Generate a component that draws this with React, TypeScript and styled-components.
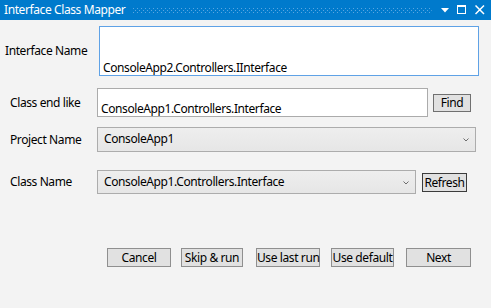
import React from "react";
import styled, { createGlobalStyle } from "styled-components";

const Global = createGlobalStyle`
  html, body { margin: 0; padding: 0; background: #f3f3f3; }
  body { font-family: "Noto Sans", "Open Sans", sans-serif; font-size: 12px; letter-spacing: -0.4px; color: #000; }
  * { box-sizing: border-box; }
`;

const Window = styled.div`
  width: 491px;
  height: 308px;
  background: #f3f3f3;
  display: flex;
  flex-direction: column;
  overflow: hidden;
`;

const TitleBar = styled.div`
  height: 20px;
  background: #007acc;
  display: flex;
  align-items: center;
  padding: 0 6px 0 4px;
  color: #fff;
`;

const Title = styled.span`
  font-size: 12px;
  line-height: 20px;
  white-space: nowrap;
`;

const GripBox = styled.svg`
  flex: 1;
  height: 5px;
  margin: 1px 9px 0 8px;
`;

const TitleIcons = styled.div`
  display: flex;
  align-items: center;
  gap: 8px;
  height: 20px;
`;

const Content = styled.div`
  display: flex;
  flex-direction: column;
`;

const Row = styled.div<{ $top: number; $h: number }>`
  display: grid;
  grid-template-columns: 97px auto auto;
  justify-content: start;
  align-items: center;
  margin-top: ${(p) => p.$top}px;
  height: ${(p) => p.$h}px;
`;

const Label = styled.div<{ $indent: number }>`
  padding-left: ${(p) => p.$indent}px;
  white-space: nowrap;
  line-height: 16px;
`;

const TextBox = styled.div<{ $w: number; $h: number; $focus?: boolean; $shift?: number }>`
  width: ${(p) => p.$w}px;
  height: ${(p) => p.$h}px;
  margin-left: ${(p) => p.$shift || 0}px;
  background: #fff;
  border: 1px solid ${(p) => (p.$focus ? "#5fa2e6" : "#ababab")};
  display: flex;
  align-items: flex-end;
  padding: 0 3px 0 3px;
  line-height: 15px;
  white-space: nowrap;
  overflow: hidden;
`;

const Combo = styled.div<{ $w: number; $h: number }>`
  width: ${(p) => p.$w}px;
  height: ${(p) => p.$h}px;
  background: linear-gradient(#eeeeee, #e6e6e6);
  border: 1px solid #acacac;
  display: flex;
  align-items: center;
  justify-content: space-between;
  padding: 0 6px 2px 6px;
  white-space: nowrap;
`;

const Chevron = styled.svg`
  width: 6px;
  height: 4px;
  margin-top: 3px;
`;

const Button = styled.button<{ $w: number; $h?: number; $border?: string; $ml?: number }>`
  width: ${(p) => p.$w}px;
  height: ${(p) => p.$h || 19}px;
  margin-left: ${(p) => p.$ml || 0}px;
  background: #e1e1e1;
  border: 1px solid ${(p) => p.$border || "#8f8f8f"};
  border-radius: 0;
  font-family: inherit;
  font-size: 12px;
  letter-spacing: -0.4px;
  line-height: 15px;
  color: #000;
  padding: 0;
  white-space: nowrap;
`;

const ButtonBar = styled.div`
  display: flex;
  margin-top: 54px;
  padding-left: 107px;
`;

const ChevronIcon = () => (
  <Chevron viewBox="0 0 6 4">
    <path d="M0.5 0.5 L3 3 L5.5 0.5" stroke="#6d6d6d" strokeWidth="1" fill="none" />
  </Chevron>
);

export default function App() {
  return (
    <Window>
      <Global />
      <TitleBar>
        <Title>Interface Class Mapper</Title>
        <GripBox>
          <defs>
            <pattern id="grip" width="4" height="4" patternUnits="userSpaceOnUse">
              <rect x="0" y="0" width="1" height="1" fill="#5aa6e0" />
              <rect x="2" y="2" width="1" height="1" fill="#5aa6e0" />
            </pattern>
          </defs>
          <rect width="100%" height="100%" fill="url(#grip)" />
        </GripBox>
        <TitleIcons>
          <svg width="8" height="5" viewBox="0 0 8 5">
            <path d="M0 0 H8 L4 4.5 Z" fill="#fff" />
          </svg>
          <svg width="10" height="10" viewBox="0 0 10 10">
            <rect x="0.5" y="0.5" width="8" height="8" fill="none" stroke="#fff" strokeWidth="1" />
            <rect x="0" y="0" width="9" height="2" fill="#fff" />
          </svg>
          <svg width="10" height="10" viewBox="0 0 10 10">
            <path d="M0.5 0.5 L9 9 M9 0.5 L0.5 9" stroke="#fff" strokeWidth="1.5" />
          </svg>
        </TitleIcons>
      </TitleBar>
      <Content>
        <Row $top={6} $h={50}>
          <Label $indent={5}>Interface Name</Label>
          <TextBox $w={380} $h={50} $focus $shift={2}>
            ConsoleApp2.Controllers.IInterface
          </TextBox>
        </Row>
        <Row $top={12} $h={29}>
          <Label $indent={10}>Class end like</Label>
          <TextBox $w={331} $h={29}>ConsoleApp1.Controllers.Interface</TextBox>
          <Button $w={38} $h={18} $ml={5} $border="#707070">Find</Button>
        </Row>
        <Row $top={10} $h={25}>
          <Label $indent={10}>Project Name</Label>
          <Combo $w={379} $h={25}>
            <span>ConsoleApp1</span>
            <ChevronIcon />
          </Combo>
        </Row>
        <Row $top={18} $h={24}>
          <Label $indent={10}>Class Name</Label>
          <Combo $w={319} $h={24}>
            <span>ConsoleApp1.Controllers.Interface</span>
            <ChevronIcon />
          </Combo>
          <Button $w={45} $h={19} $ml={6} $border="#3c3c3c">Refresh</Button>
        </Row>
        <ButtonBar>
          <Button $w={64}>Cancel</Button>
          <Button $w={62} $ml={10}>Skip &amp; run</Button>
          <Button $w={64} $ml={13}>Use last run</Button>
          <Button $w={63} $ml={11}>Use default</Button>
          <Button $w={65} $ml={12}>Next</Button>
        </ButtonBar>
      </Content>
    </Window>
  );
}
